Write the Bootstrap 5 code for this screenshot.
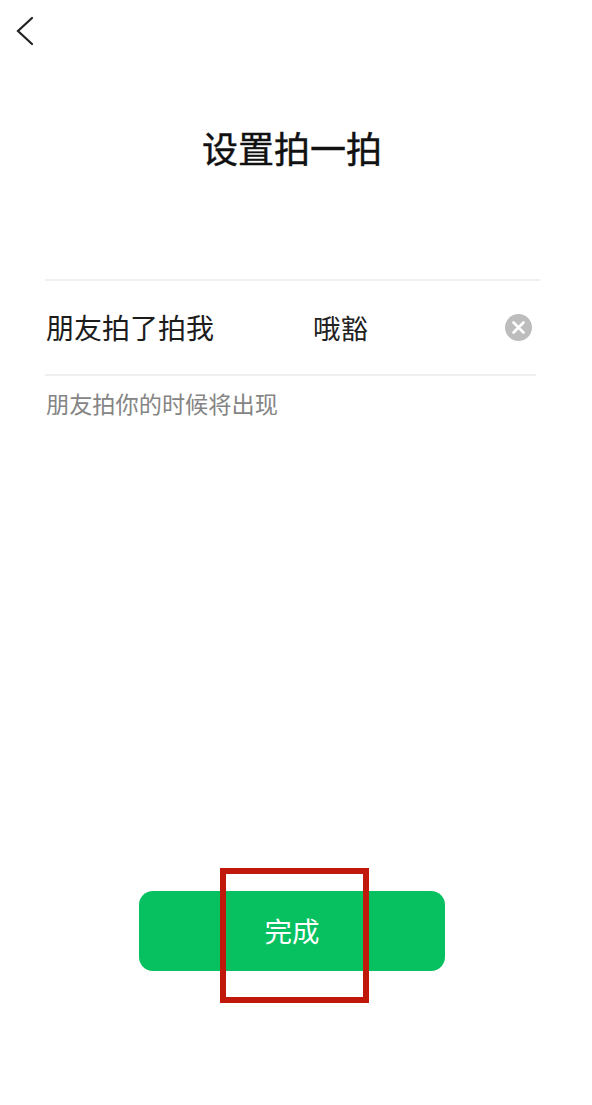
<!doctype html>
<html lang="zh">
<head>
<meta charset="utf-8">
<title>设置拍一拍</title>
<link href="https://cdn.jsdelivr.net/npm/bootstrap@5.3.0/dist/css/bootstrap.min.css" rel="stylesheet">
<style>
html,body{margin:0;background:#fff;}
body{font-family:"Liberation Sans","Noto Sans CJK SC",sans-serif;color:#1a1a1a;}
.screen{width:592px;height:1105px;overflow:hidden;}
.back-wrap{padding:16px 0 0 15px;height:46px;}
.back-wrap svg{display:block;}
.page-title{font-size:36px;line-height:50px;font-weight:400;-webkit-text-stroke:.45px #111;color:#111;margin:80px 8px 0 0;text-align:center;height:50px;}
.field-block{margin:103px 0 0 45px;}
.rule-top{width:495px;height:2px;background:#efefef;}
.rule-bottom{width:491px;height:2px;background:#efefef;}
.field-row{width:495px;height:93px;}
.field-label{font-size:28px;line-height:40px;width:268px;padding:4px 0 0 1px;color:#1c1c1c;}
.field-value{font-size:27.5px;line-height:40px;color:#222;padding-top:4px;}
.clear-icon{margin-right:8px;margin-top:0;display:block;}
.hint-text{font-size:23.2px;line-height:32px;color:#858585;margin:13px 0 0 1px;}
.done-wrap{margin:470px 0 0 139px;width:306px;height:80px;position:relative;}
.done-btn{width:306px;height:80px;background:#07c160;border:0;border-radius:14px;color:#fff;font-size:27.5px;line-height:1;padding:4px 0 0;display:block;}
.done-btn:hover,.done-btn:active{background:#07c160!important;color:#fff!important;}
.mark-box{position:absolute;left:81px;top:-23px;width:149px;height:135px;border:6px solid #c0190b;pointer-events:none;}
</style>
</head>
<body>
<div class="screen d-flex flex-column">
  <div class="back-wrap">
    <svg width="20" height="30" viewBox="0 0 20 30" fill="none" aria-label="返回"><path d="M17 2 L3 15 L17 28" stroke="#222" stroke-width="2.2" stroke-linecap="round" stroke-linejoin="miter"/></svg>
  </div>
  <h1 class="page-title">设置拍一拍</h1>
  <div class="field-block">
    <div class="rule-top"></div>
    <div class="field-row d-flex align-items-center">
      <div class="field-label">朋友拍了拍我</div>
      <div class="field-value flex-grow-1">哦豁</div>
      <svg class="clear-icon" width="27" height="27" viewBox="0 0 27 27" aria-label="清除"><circle cx="13.5" cy="13.5" r="13.5" fill="#bdbdbd"/><path d="M8.5 8.5 L18.5 18.5 M18.5 8.5 L8.5 18.5" stroke="#fff" stroke-width="2.6" stroke-linecap="round"/></svg>
    </div>
    <div class="rule-bottom"></div>
    <div class="hint-text">朋友拍你的时候将出现</div>
  </div>
  <div class="done-wrap">
    <button type="button" class="btn done-btn">完成</button>
    <div class="mark-box"></div>
  </div>
</div>
<script src="https://cdn.jsdelivr.net/npm/bootstrap@5.3.0/dist/js/bootstrap.bundle.min.js"></script>
</body>
</html>
